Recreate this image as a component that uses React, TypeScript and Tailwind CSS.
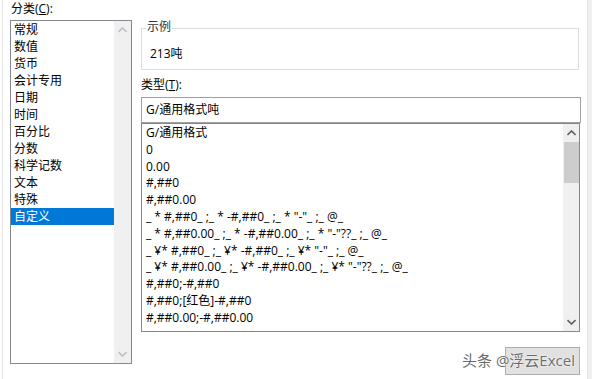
import React from "react";

const font = { fontFamily: '"Open Sans", "Noto Sans CJK SC", sans-serif' };

const cats = ["常规", "数值", "货币", "会计专用", "日期", "时间", "百分比", "分数", "科学记数", "文本", "特殊", "自定义"];
const fmts = [
  "G/通用格式",
  "0",
  "0.00",
  "#,##0",
  "#,##0.00",
  '_ * #,##0_ ;_ * -#,##0_ ;_ * "-"_ ;_ @_',
  '_ * #,##0.00_ ;_ * -#,##0.00_ ;_ * "-"??_ ;_ @_',
  '_ ¥* #,##0_ ;_ ¥* -#,##0_ ;_ ¥* "-"_ ;_ @_',
  '_ ¥* #,##0.00_ ;_ ¥* -#,##0.00_ ;_ ¥* "-"??_ ;_ @_',
  "#,##0;-#,##0",
  "#,##0;[红色]-#,##0",
  "#,##0.00;-#,##0.00",
];

function Up({ color }: { color: string }) {
  return (
    <svg width="9" height="6" viewBox="0 0 9 6">
      <path d="M0.5 5 L4.5 1 L8.5 5" stroke={color} strokeWidth="1.6" fill="none" />
    </svg>
  );
}
function Down({ color }: { color: string }) {
  return (
    <svg width="9" height="6" viewBox="0 0 9 6">
      <path d="M0.5 1 L4.5 5 L8.5 1" stroke={color} strokeWidth="1.6" fill="none" />
    </svg>
  );
}

export default function App() {
  return (
    <div className="relative w-[592px] h-[379px] bg-white overflow-hidden flex text-[12px] text-black" style={font}>
      {/* left dialog edge */}
      <div className="w-[3px] h-full border-r border-[#e3e3e3] shrink-0" />
      {/* left column */}
      <div className="ml-[7px] w-[122px] flex flex-col shrink-0">
        <div className="h-[20px] leading-[17px] pl-[1px]">
          分类(<span className="underline">C</span>):
        </div>
        <div className="h-[344px] border border-[#828790] flex">
          <div className="flex-1 flex flex-col">
            {cats.map((c, i) => (
              <div
                key={c}
                className={
                  "h-[17px] leading-[17px] pl-[3px] " +
                  (i === cats.length - 1 ? "bg-[#0078d7] text-white" : "")
                }
              >
                {c}
              </div>
            ))}
          </div>
          <div className="w-[17px] bg-[#f0f0f0] flex flex-col justify-between items-center py-[6px]">
            <Up color="#c0c0c0" />
            <Down color="#c0c0c0" />
          </div>
        </div>
      </div>
      {/* right column */}
      <div className="ml-[9px] w-[440px] flex flex-col shrink-0">
        <div className="mt-[28px] h-[42px] border border-[#dcdcdc] relative mr-[2px]">
          <span className="absolute -top-[10px] left-[4px] bg-white px-[1px] leading-[16px] text-[#333]">示例</span>
          <div className="pl-[8px] pt-[16px] leading-[18px]">213吨</div>
        </div>
        <div className="h-[27px] leading-[16px] pt-[7px]">
          类型(<span className="underline">T</span>):
        </div>
        <div className="h-[26px] border border-[#a0a0a0] pl-[4px] leading-[24px]">G/通用格式吨</div>
        <div className="h-[209px] border border-[#828790] flex mr-[1px]">
          <div className="flex-1 flex flex-col pt-[1px] overflow-hidden">
            {fmts.map((f) => (
              <div key={f} className="h-[16.8px] leading-[16.8px] pl-[4px] whitespace-pre">
                {f}
              </div>
            ))}
          </div>
          <div className="w-[16px] bg-[#f0f0f0] flex flex-col items-center">
            <div className="h-[18px] flex items-center justify-center">
              <Up color="#606060" />
            </div>
            <div className="w-[15px] h-[41px] bg-[#cdcdcd]" />
            <div className="flex-1" />
            <div className="h-[18px] flex items-center justify-center">
              <Down color="#606060" />
            </div>
          </div>
        </div>
        <div className="mt-[15px] flex justify-end mr-[1px]">
          <div className="w-[75px] h-[28px] bg-[#e1e1e1] border border-[#adadad]" />
        </div>
      </div>
      {/* right outer strip */}
      <div className="ml-auto w-[5px] h-full bg-[#f0f0f0] border-l border-[#e5e5e5]" />
      {/* watermark */}
      <div
        className="absolute left-[462px] top-[350px] text-[15px] leading-[20px] text-[#6b6b6b] whitespace-nowrap"
        style={{ textShadow: "0 0 2px #fff, 0 0 1px #fff" }}
      >
        头条 @浮云Excel
      </div>
    </div>
  );
}
